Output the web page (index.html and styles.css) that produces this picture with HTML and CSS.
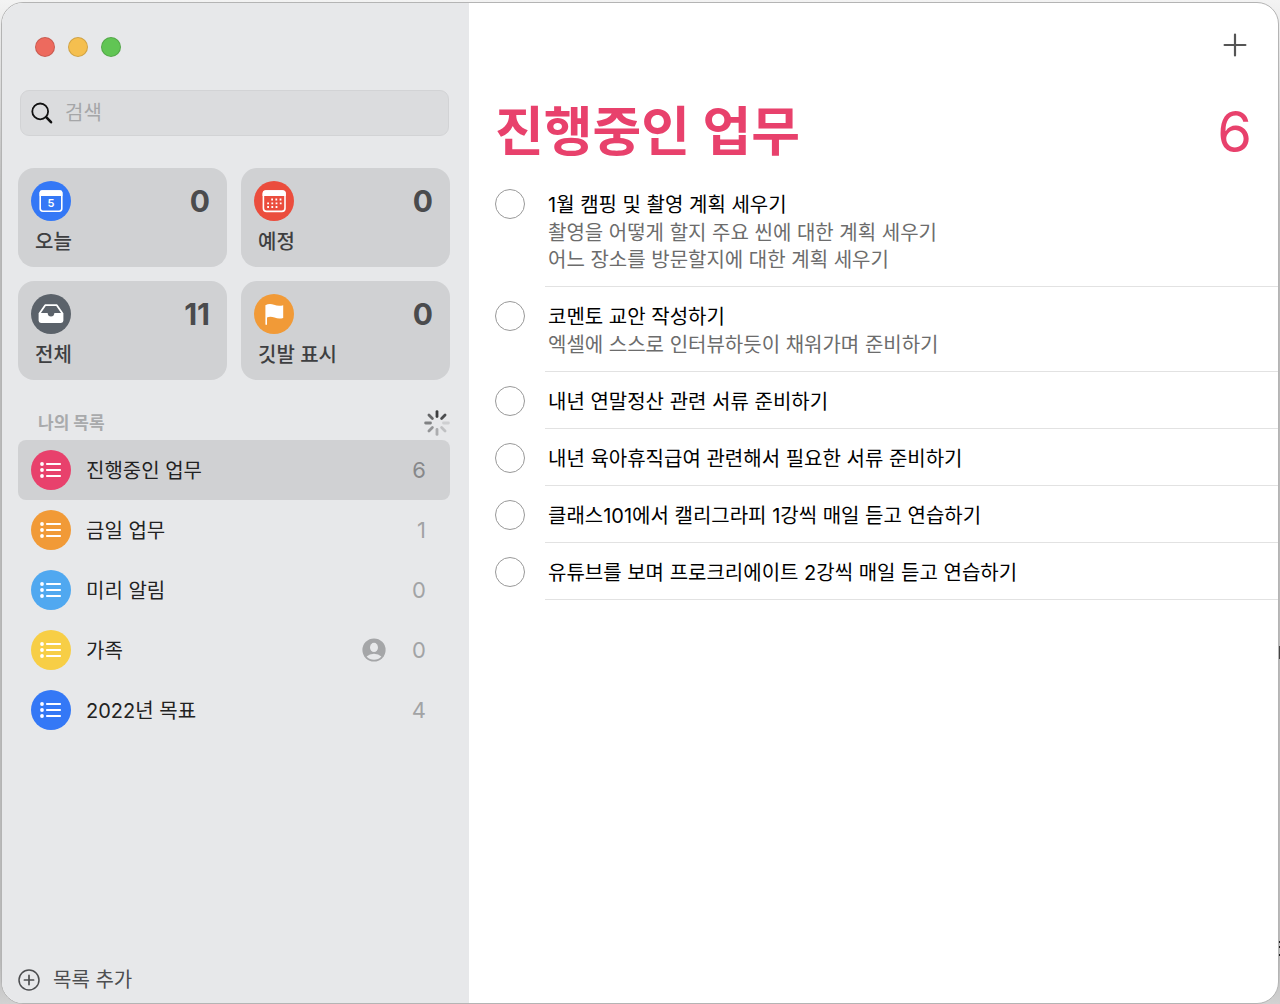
FILE: index.html
```html
<!DOCTYPE html>
<html lang="ko">
<head>
    <meta charset="UTF-8">
    <meta name="viewport" content="width=device-width, initial-scale=1.0">
    <title>진행중인 업무</title>
    <link rel="stylesheet" href="styles.css">
</head>
<body>
    <!-- Shared list icon -->
    <svg class="sprite" width="0" height="0" aria-hidden="true">
        <symbol id="icon-list" viewBox="0 0 40 40">
            <g fill="#fff">
                <circle cx="11" cy="14" r="1.9"/>
                <circle cx="11" cy="20" r="1.9"/>
                <circle cx="11" cy="26" r="1.9"/>
            </g>
            <path d="M16 14h13M16 20h13M16 26h13" stroke="#fff" stroke-width="2.2" stroke-linecap="round"/>
        </symbol>
    </svg>

    <!-- Edge of the window behind -->
    <div class="behind" aria-hidden="true"></div>

    <div class="window">
        <!-- Sidebar -->
        <aside class="sidebar">
            <div class="window-controls">
                <button class="control close" aria-label="닫기"></button>
                <button class="control minimize" aria-label="최소화"></button>
                <button class="control maximize" aria-label="확대"></button>
            </div>

            <div class="search">
                <svg width="24" height="24" viewBox="0 0 24 24" fill="none" stroke="#111" aria-hidden="true">
                    <circle cx="10.2" cy="10.4" r="7.9" stroke-width="1.8"/>
                    <path d="M16.2 16.2l4.8 5" stroke-width="2.6" stroke-linecap="round"/>
                </svg>
                <input type="text" id="search" placeholder="검색" aria-label="검색">
            </div>

            <div class="tiles">
                <button class="tile">
                    <svg class="icon blue" viewBox="0 0 40 40" aria-hidden="true">
                        <rect x="9.2" y="10" width="21.6" height="20.2" rx="2.6" fill="none" stroke="#fff" stroke-width="1.6"/>
                        <path d="M8.6 11.4q0-2.2 2.2-2.2h18.4q2.2 0 2.2 2.2V15H8.6z" fill="#fff"/>
                        <text x="20" y="25.6" text-anchor="middle" class="icon-day">5</text>
                    </svg>
                    <span class="tile-count">0</span>
                    <span class="tile-label">오늘</span>
                </button>
                <button class="tile">
                    <svg class="icon red" viewBox="0 0 40 40" aria-hidden="true">
                        <rect x="9.4" y="10" width="21.6" height="20.4" rx="3.2" fill="none" stroke="#fff" stroke-width="1.6"/>
                        <path d="M8.6 12.2q0-3 3-3h17.2q3 0 3 3V15H8.6z" fill="#fff"/>
                        <path d="M17.2 18.5h10.4M13.2 22.3h14.4M13.2 26h10.2" stroke="#fff" stroke-width="1.8" stroke-dasharray="1.8 2.4"/>
                    </svg>
                    <span class="tile-count">0</span>
                    <span class="tile-label">예정</span>
                </button>
                <button class="tile">
                    <svg class="icon slate" viewBox="0 0 40 40" aria-hidden="true">
                        <path d="M8.5 19.5L14.2 11.2H25.8L31.5 19.5" fill="none" stroke="#fff" stroke-width="1.8" stroke-linejoin="round"/>
                        <path d="M7.6 19H16.6Q17 22.6 20 22.6T23.4 19H32.4V26.6Q32.4 29 30 29H10Q7.6 29 7.6 26.6z" fill="#fff"/>
                    </svg>
                    <span class="tile-count">11</span>
                    <span class="tile-label">전체</span>
                </button>
                <button class="tile">
                    <svg class="icon orange" viewBox="0 0 40 40" aria-hidden="true">
                        <path d="M11.4 11.2Q15.5 9 20 10.8T29.2 11.2V24Q25 25.4 20.5 23.6T13 23.6V30Q13 31 12.2 31T11.4 30z" fill="#fff"/>
                    </svg>
                    <span class="tile-count">0</span>
                    <span class="tile-label">깃발 표시</span>
                </button>
            </div>

            <div class="section-header">
                <h2>나의 목록</h2>
                <svg width="26" height="26" viewBox="-13 -13 26 26" stroke="#3c3d3f" stroke-width="2.8" stroke-linecap="round" aria-hidden="true">
                    <path d="M0-6.5V-11.4"/>
                    <path d="M0-6.5V-11.4" transform="rotate(45)" opacity=".9"/>
                    <path d="M0-6.5V-11.4" transform="rotate(90)" opacity=".14"/>
                    <path d="M0-6.5V-11.4" transform="rotate(135)" opacity=".22"/>
                    <path d="M0-6.5V-11.4" transform="rotate(180)" opacity=".34"/>
                    <path d="M0-6.5V-11.4" transform="rotate(225)" opacity=".48"/>
                    <path d="M0-6.5V-11.4" transform="rotate(270)" opacity=".6"/>
                    <path d="M0-6.5V-11.4" transform="rotate(315)" opacity=".75"/>
                </svg>
            </div>

            <nav class="lists">
                <a href="#" class="list-row selected">
                    <svg class="icon pink" aria-hidden="true"><use href="#icon-list"/></svg>
                    <span class="list-name">진행중인 업무</span>
                    <span class="list-count">6</span>
                </a>
                <a href="#" class="list-row">
                    <svg class="icon orange" aria-hidden="true"><use href="#icon-list"/></svg>
                    <span class="list-name">금일 업무</span>
                    <span class="list-count">1</span>
                </a>
                <a href="#" class="list-row">
                    <svg class="icon sky" aria-hidden="true"><use href="#icon-list"/></svg>
                    <span class="list-name">미리 알림</span>
                    <span class="list-count">0</span>
                </a>
                <a href="#" class="list-row">
                    <svg class="icon yellow" aria-hidden="true"><use href="#icon-list"/></svg>
                    <span class="list-name">가족</span>
                    <svg width="24" height="24" viewBox="0 0 24 24" aria-hidden="true">
                        <circle cx="12" cy="12" r="11.6" fill="#a5a6a8"/>
                        <ellipse cx="12" cy="9.4" rx="4" ry="4.6" fill="#e7e8ea"/>
                        <path d="M4.6 18.6Q7.4 15.8 12 15.8T19.4 18.6Q16.4 21.8 12 21.8T4.6 18.6z" fill="#e7e8ea"/>
                    </svg>
                    <span class="list-count">0</span>
                </a>
                <a href="#" class="list-row">
                    <svg class="icon blue" aria-hidden="true"><use href="#icon-list"/></svg>
                    <span class="list-name">2022년 목표</span>
                    <span class="list-count">4</span>
                </a>
            </nav>

            <button class="add-list">
                <svg width="22" height="22" viewBox="0 0 22 22" fill="none" stroke="#4d4e50" stroke-linecap="round" aria-hidden="true">
                    <circle cx="11" cy="11" r="10" stroke-width="1.5"/>
                    <path d="M11 6.4v9.2M6.4 11h9.2" stroke-width="1.7"/>
                </svg>
                목록 추가
            </button>
        </aside>

        <!-- Reminders -->
        <main class="content">
            <div class="toolbar">
                <button class="add-item" aria-label="새로운 미리 알림">
                    <svg width="24" height="24" viewBox="0 0 24 24" stroke="#555" stroke-width="2.2" stroke-linecap="round" aria-hidden="true">
                        <path d="M12 1.6v20.8M1.6 12h20.8"/>
                    </svg>
                </button>
            </div>

            <header class="title">
                <h1>진행중인 업무</h1>
                <span class="total">6</span>
            </header>

            <ul class="reminders">
                <li class="reminder">
                    <input type="checkbox" id="item1">
                    <div class="reminder-body">
                        <label for="item1">1월 캠핑 및 촬영 계획 세우기</label>
                        <p>촬영을 어떻게 할지 주요 씬에 대한 계획 세우기<br>어느 장소를 방문할지에 대한 계획 세우기</p>
                    </div>
                </li>
                <li class="reminder">
                    <input type="checkbox" id="item2">
                    <div class="reminder-body">
                        <label for="item2">코멘토 교안 작성하기</label>
                        <p>엑셀에 스스로 인터뷰하듯이 채워가며 준비하기</p>
                    </div>
                </li>
                <li class="reminder">
                    <input type="checkbox" id="item3">
                    <div class="reminder-body">
                        <label for="item3">내년 연말정산 관련 서류 준비하기</label>
                    </div>
                </li>
                <li class="reminder">
                    <input type="checkbox" id="item4">
                    <div class="reminder-body">
                        <label for="item4">내년 육아휴직급여 관련해서 필요한 서류 준비하기</label>
                    </div>
                </li>
                <li class="reminder">
                    <input type="checkbox" id="item5">
                    <div class="reminder-body">
                        <label for="item5">클래스101에서 캘리그라피 1강씩 매일 듣고 연습하기</label>
                    </div>
                </li>
                <li class="reminder">
                    <input type="checkbox" id="item6">
                    <div class="reminder-body">
                        <label for="item6">유튜브를 보며 프로크리에이트 2강씩 매일 듣고 연습하기</label>
                    </div>
                </li>
            </ul>
        </main>
    </div>
</body>
</html>
```

FILE: styles.css
```css
:root {
    --pink: #e8416c;
    --orange: #f19a37;
    --sky: #50a8f0;
    --yellow: #f7ce46;
    --blue: #3478f6;
    --red: #eb4d3d;
    --slate: #5b626a;
    --sidebar: #e7e8ea;
    --tile: #d0d1d3;
    --line: #e2e2e2;
}

* {
    box-sizing: border-box;
}

body {
    margin: 0;
    padding: 2px 1px 0;
    min-height: 100vh;
    display: flex;
    font-family: Inter, "Noto Sans CJK KR", sans-serif;
    font-size: 20px;
    line-height: 28px;
    color: #222;
    background: linear-gradient(#f3f3f3, #b9b9b9 200px, #b9b9b9 960px, #d2d2d2);
}

button {
    font: inherit;
    color: inherit;
    background: none;
    border: none;
    padding: 0;
    text-align: left;
}

h1, h2, p, ul {
    margin: 0;
    padding: 0;
}

svg {
    flex: none;
    display: block;
}

.sprite {
    position: absolute;
}

.behind {
    position: absolute;
    top: 646px;
    right: 0;
    width: 1px;
    height: 312px;
    background: linear-gradient(#444 13px, transparent 13px 295px, #222 295px 297px, transparent 297px 300px, #222 300px 302px, transparent 302px 308px, #222 308px 310px, transparent 310px);
}

.window {
    flex: 1;
    display: flex;
    border: 1px solid #b4b4b4;
    border-radius: 22px;
    overflow: hidden;
    background: #fff;
}

/* Sidebar */
.sidebar {
    flex: none;
    width: 467px;
    padding: 34px 19px 9px 16px;
    display: flex;
    flex-direction: column;
    background: var(--sidebar);
}

.window-controls {
    display: flex;
    gap: 13px;
    padding-left: 17px;
}

.control {
    width: 20px;
    height: 20px;
    border-radius: 50%;
    border: 1px solid rgba(0, 0, 0, 0.15);
}

.close { background: #ed6a5e; }
.minimize { background: #f5bf4f; }
.maximize { background: #61c554; }

.search {
    display: flex;
    align-items: center;
    gap: 11px;
    height: 46px;
    margin: 33px 1px 0 2px;
    padding: 0 9px;
    border: 1px solid #d2d3d5;
    border-radius: 9px;
    background: #dbdcde;
}

.search input {
    flex: 1;
    min-width: 0;
    padding: 0;
    border: none;
    background: none;
    font: inherit;
    outline: none;
}

.search input::placeholder {
    color: #a5a6a8;
}

.tiles {
    display: grid;
    grid-template-columns: 1fr 1fr;
    gap: 14px;
    margin-top: 32px;
}

.tile {
    display: grid;
    grid-template-columns: 40px 1fr;
    align-items: center;
    row-gap: 7px;
    padding: 13px 17px 11px 13px;
    border-radius: 16px;
    background: var(--tile);
    font-weight: 500;
    color: #3e3f41;
}

.tile-count {
    justify-self: end;
    font-size: 30px;
    font-weight: 700;
    color: #4a4b4d;
}

.tile-label {
    grid-column: 1 / -1;
    padding-left: 4px;
}

.icon {
    width: 40px;
    height: 40px;
    border-radius: 50%;
}

.icon-day {
    font-size: 11px;
    font-weight: 600;
    fill: #fff;
}

.pink { background: var(--pink); }
.orange { background: var(--orange); }
.sky { background: var(--sky); }
.yellow { background: var(--yellow); }
.blue { background: var(--blue); }
.red { background: var(--red); }
.slate { background: var(--slate); }

.section-header {
    display: flex;
    align-items: center;
    justify-content: space-between;
    height: 35px;
    margin-top: 25px;
    padding-left: 20px;
}

.section-header h2 {
    font-size: 17px;
    font-weight: 700;
    color: #a9aaac;
}

.list-row {
    display: flex;
    align-items: center;
    height: 60px;
    padding: 0 24px 0 13px;
    border-radius: 8px;
    color: inherit;
    text-decoration: none;
}

.list-row.selected {
    background: var(--tile);
}

.list-name {
    flex: 1;
    margin-left: 15px;
    padding-top: 2px;
}

.list-count {
    width: 40px;
    font-size: 22px;
    text-align: right;
    color: #a2a3a5;
}

.selected .list-count {
    color: #87888a;
}

.add-list {
    display: flex;
    align-items: center;
    gap: 13px;
    margin-top: auto;
    color: #4d4e50;
}

/* Reminders */
.content {
    flex: 1;
    min-width: 0;
    padding: 30px 0 0 26px;
}

.toolbar {
    display: flex;
    justify-content: flex-end;
    padding-right: 31px;
}

.title {
    display: flex;
    align-items: center;
    justify-content: space-between;
    height: 80px;
    margin-top: 35px;
    padding-right: 26px;
    color: var(--pink);
}

.title h1 {
    font-size: 53px;
    font-weight: 700;
}

.total {
    font-size: 56px;
}

.reminders {
    margin-top: 3px;
    list-style: none;
}

.reminder {
    display: flex;
    gap: 20px;
}

.reminder input {
    appearance: none;
    flex: none;
    width: 30px;
    height: 30px;
    margin: 14px 0 0;
    border: 1px solid #999;
    border-radius: 50%;
}

.reminder input:checked {
    background: var(--pink);
}

.reminder-body {
    flex: 1;
    padding: 16px 3px 12px;
    border-bottom: 1px solid var(--line);
}

.reminder label {
    display: block;
    color: #000;
}

.reminder p {
    margin-top: 1px;
    line-height: 27px;
    color: #6c6c6c;
}
```
